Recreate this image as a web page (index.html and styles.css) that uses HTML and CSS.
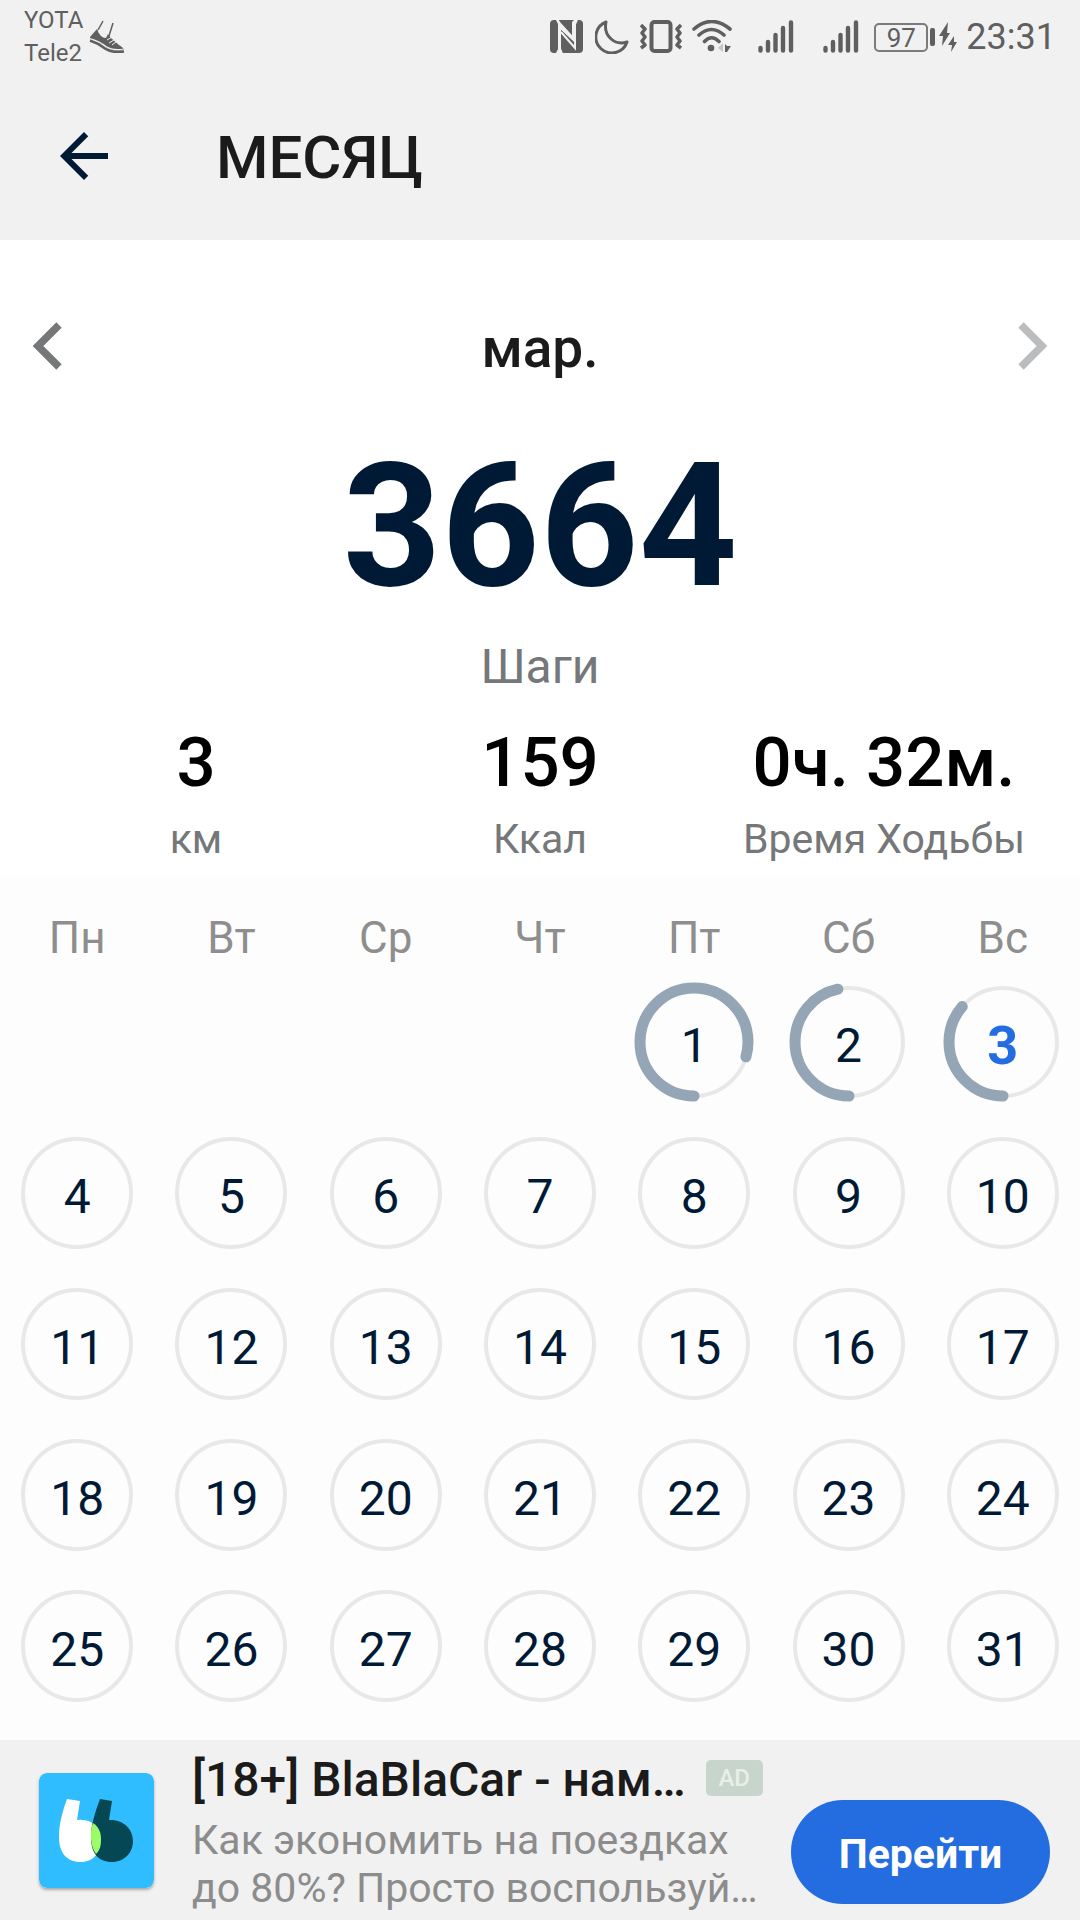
FILE: index.html
```html
<!DOCTYPE html>
<html lang="ru">
<head>
<meta charset="utf-8">
<meta name="viewport" content="width=device-width, initial-scale=1">
<title>Месяц</title>
<link rel="stylesheet" href="styles.css">
</head>
<body>
<div class="statusbar">
  <div class="carriers"><span>YOTA</span><span>Tele2</span></div>
  <svg class="shoe" width="38" height="36" viewBox="0 0 38 36">
    <path d="M8 9 L1 17 L1 19 Q10 21 18 28 Q24 32 35 30 Q35 28 30 25 L22 18 L19 14 L17 18 Q11 18 8 9Z" fill="#5f5f5f"/>
    <path d="M14 1 L9 10 M24 3 L20 16" fill="none" stroke="#5f5f5f" stroke-width="1.500"/>
    <path d="M1 20.500 Q9 23 16 28.500 Q22 33 35 31.500" fill="none" stroke="#5f5f5f" stroke-width="2.500"/>
    <path d="M1 18.500 Q10 21 17 26.500 Q24 31 35 29" fill="none" stroke="#f1f1f1" stroke-width="1.200"/>
    <path d="M18 20 L23 17 M20 23 L25 20 M23 25 L27 22" stroke="#f1f1f1" stroke-width="1"/>
  </svg>
  <div class="tray">
    <svg width="34" height="34" viewBox="0 0 34 34">
      <rect x="0" y="0" width="33" height="33" rx="4" fill="#5f5f5f"/>
      <path d="M6 0 H9 L22 15 V2 L24 0 H27 L25 4 V23 L11 10 V28 L13 33 H6 L8 29 V4Z" fill="#f1f1f1"/>
      <path d="M11 10 V28 L13 33 H25 V23Z" fill="#5f5f5f"/>
      <path d="M11 12 L25 28 V4 L27 0" fill="none" stroke="#f1f1f1" stroke-width="2"/>
      <path d="M10 2 L22 15 V3 L21 0 H9Z" fill="#5f5f5f"/>
    </svg>
    <svg class="moon" width="34" height="34" viewBox="0 0 34 34"><path d="M11 2 A16 16 0 1 0 32 22 C20 26 8 16 11 2Z" fill="none" stroke="#5f5f5f" stroke-width="3" stroke-linejoin="round"/></svg>
    <svg class="vibrate" width="42" height="34" viewBox="0 0 42 34" fill="none" stroke="#5f5f5f"><rect x="11.500" y="2" width="19" height="29" rx="3" stroke-width="4"/><path d="M1 5 L5 9 L2 13 L5 17 L2 21 L5 25 L1 28 M41 5 L37 9 L40 13 L37 17 L40 21 L37 25 L41 28" stroke-width="3.500" stroke-linejoin="round"/></svg>
    <svg class="wifi" width="40" height="34" viewBox="0 0 40 34"><path d="M2 9 Q19.500 -6 38 9 M7 15 Q19.500 4 32 15 M12.500 21.500 Q19.500 14 27 21.500" fill="none" stroke="#5f5f5f" stroke-width="3.600" stroke-linecap="round"/><circle cx="19" cy="28" r="3.300" fill="#5f5f5f"/><path d="M31 23 V32 L26 28Z" fill="#c4c4c4"/><path d="M33 24 V32 L35 32 L39 26 L35 26Z" fill="#5f5f5f"/></svg>
    <svg class="signal" width="36" height="34" viewBox="0 0 36 34" stroke="#5f5f5f" stroke-width="4.400" stroke-linecap="round"><path d="M2.500 28 V30.500 M10 22 V30.500 M17.500 15 V30.500 M25 8 V30.500 M33 2.500 V30.500"/></svg>
    <svg class="signal-2" width="36" height="34" viewBox="0 0 36 34" stroke="#5f5f5f" stroke-width="4.400" stroke-linecap="round"><path d="M2.500 28 V30.500 M10 22 V30.500 M17.500 15 V30.500 M25 8 V30.500 M33 2.500 V30.500"/></svg>
    <span class="battery">97</span>
    <svg class="charge" width="28" height="32" viewBox="0 0 28 32" fill="#5f5f5f"><rect x="0" y="7" width="5" height="18" rx="2"/><path d="M18 1 L9 15 H13 L12 25 L20 12 H17Z M24 15 L18 24 H22 L21 31 L27 21 H24Z"/></svg>
    <span class="clock">23:31</span>
  </div>
</div>

<header class="appbar">
  <button class="icon-button" type="button" aria-label="Назад">
    <svg width="72" height="72" viewBox="0 0 24 24" fill="#001a35"><path d="M20 11H7.830l5.590-5.590L12 4l-8 8 8 8 1.410-1.410L7.830 13H20v-2z"/></svg>
  </button>
  <h1>МЕСЯЦ</h1>
</header>

<main>
  <section class="summary">
    <div class="month-nav">
      <button class="icon-button" type="button" aria-label="Предыдущий месяц"><svg width="30" height="48" viewBox="0 0 30 48" fill="none" stroke="#757779" stroke-width="7.500"><path d="M27 3 L6 24 L27 45"/></svg></button>
      <h2>мар.</h2>
      <button class="icon-button" type="button" aria-label="Следующий месяц" disabled><svg width="30" height="48" viewBox="0 0 30 48" fill="none" stroke="#bbbcbe" stroke-width="7.500"><path d="M3 3 L24 24 L3 45"/></svg></button>
    </div>
    <p class="steps">3664</p>
    <p class="steps-label">Шаги</p>
    <dl class="stats">
      <div><dd>3</dd><dt>км</dt></div>
      <div><dd>159</dd><dt>Ккал</dt></div>
      <div><dd>0ч. 32м.</dd><dt>Время Ходьбы</dt></div>
    </dl>
  </section>

  <section class="calendar">
    <table>
      <thead>
        <tr><th>Пн</th><th>Вт</th><th>Ср</th><th>Чт</th><th>Пт</th><th>Сб</th><th>Вс</th></tr>
      </thead>
      <tbody>
        <tr>
          <td></td><td></td><td></td><td></td>
          <td><button class="day" type="button">1<svg class="progress" viewBox="0 0 120 120"><circle cx="60" cy="60" r="54" pathLength="360" stroke-dasharray="286 360"/></svg></button></td>
          <td><button class="day" type="button">2<svg class="progress" viewBox="0 0 120 120"><circle cx="60" cy="60" r="54" pathLength="360" stroke-dasharray="168 360"/></svg></button></td>
          <td><button class="day today" type="button">3<svg class="progress" viewBox="0 0 120 120"><circle cx="60" cy="60" r="54" pathLength="360" stroke-dasharray="131 360"/></svg></button></td>
        </tr>
        <tr>
          <td><button class="day" type="button">4</button></td>
          <td><button class="day" type="button">5</button></td>
          <td><button class="day" type="button">6</button></td>
          <td><button class="day" type="button">7</button></td>
          <td><button class="day" type="button">8</button></td>
          <td><button class="day" type="button">9</button></td>
          <td><button class="day" type="button">10</button></td>
        </tr>
        <tr>
          <td><button class="day" type="button">11</button></td>
          <td><button class="day" type="button">12</button></td>
          <td><button class="day" type="button">13</button></td>
          <td><button class="day" type="button">14</button></td>
          <td><button class="day" type="button">15</button></td>
          <td><button class="day" type="button">16</button></td>
          <td><button class="day" type="button">17</button></td>
        </tr>
        <tr>
          <td><button class="day" type="button">18</button></td>
          <td><button class="day" type="button">19</button></td>
          <td><button class="day" type="button">20</button></td>
          <td><button class="day" type="button">21</button></td>
          <td><button class="day" type="button">22</button></td>
          <td><button class="day" type="button">23</button></td>
          <td><button class="day" type="button">24</button></td>
        </tr>
        <tr>
          <td><button class="day" type="button">25</button></td>
          <td><button class="day" type="button">26</button></td>
          <td><button class="day" type="button">27</button></td>
          <td><button class="day" type="button">28</button></td>
          <td><button class="day" type="button">29</button></td>
          <td><button class="day" type="button">30</button></td>
          <td><button class="day" type="button">31</button></td>
        </tr>
      </tbody>
    </table>
  </section>
</main>

<aside class="ad">
  <svg class="ad-logo" width="115" height="115" viewBox="0 0 115 115">
    <rect width="115" height="115" rx="8" fill="#2fbdff"/>
    <path d="M28 26 L41 28 L38 47 C52 45 62 54 62 66 C62 80 54 89 42 89 C27 89 20 79 20 64 C20 51 23 40 28 26Z" fill="#fff"/>
    <path d="M61 26 L73 28 L70 47 C84 46 94 56 94 68 C94 80 85 89 73 89 C59 89 52 80 52 64 C52 51 56 40 61 26Z" fill="#054752"/>
    <path d="M54 50 C60 54 62 60 62 66 C62 73 61 77 57 81 C52 75 50 60 54 50Z" fill="#9cfc68"/>
  </svg>
  <div class="ad-copy">
    <div class="ad-head"><strong>[18+] BlaBlaCar - нам…</strong><span class="badge">AD</span></div>
    <p>Как экономить на поездках<br>до 80%? Просто воспользуй…</p>
  </div>
  <button class="cta" type="button">Перейти</button>
</aside>
</body>
</html>
```
FILE: styles.css
```css
* {
  box-sizing: border-box;
}

body {
  margin: 0;
  min-height: 100vh;
  display: flex;
  flex-direction: column;
  background: #fdfdfd;
  color: #1b1b1b;
  font-family: Roboto, "Noto Sans", sans-serif;
}

h1, h2, p, dl, dd {
  margin: 0;
}

button {
  border: 0;
  padding: 0;
  background: none;
  color: inherit;
  font: inherit;
}

svg {
  display: block;
  flex: none;
}

.icon-button {
  display: flex;
}

/* System status bar */
.statusbar {
  display: flex;
  height: 72px;
  padding: 4px 24px 0;
  background: #f1f1f1;
  color: #5f5f5f;
}

.carriers {
  display: flex;
  flex-direction: column;
  font-size: 24px;
  line-height: 33px;
}

.shoe {
  margin: 16px 0 0 6px;
}

.tray {
  display: flex;
  align-items: center;
  height: 66px;
  margin-left: auto;
}

.moon { margin-left: 11px; }
.vibrate { margin-left: 11px; }
.wifi { margin-left: 10px; }
.signal { margin-left: 26px; }
.signal-2 { margin-left: 29px; }

.battery {
  width: 54px;
  height: 29px;
  margin-left: 15px;
  border: 2px solid #7b7b7b;
  border-radius: 5px;
  font-size: 26px;
  line-height: 26px;
  text-align: center;
}

.charge {
  margin: 0 8px 0 2px;
}

.clock {
  font-size: 36px;
  line-height: 40px;
}

/* App bar */
.appbar {
  display: flex;
  align-items: center;
  gap: 96px;
  height: 168px;
  padding: 0 48px;
  background: #f1f1f1;
}

h1 {
  padding-top: 4px;
  font-size: 60px;
  line-height: 72px;
  font-weight: 500;
}

/* Monthly summary */
.summary {
  padding: 68px 24px 12px;
  background: #fff;
  text-align: center;
}

.month-nav {
  display: flex;
  align-items: center;
  justify-content: space-between;
  padding: 0 8px;
}

h2 {
  padding-top: 4px;
  font-size: 55px;
  line-height: 72px;
  font-weight: 500;
}

.steps {
  margin-top: 42px;
  color: #001a35;
  font-size: 172px;
  line-height: 200px;
  font-weight: 700;
}

.steps-label {
  margin-top: 13px;
  color: #757779;
  font-size: 48px;
  line-height: 56px;
}

.stats {
  display: grid;
  grid-template-columns: repeat(3, 1fr);
  margin-top: 28px;
}

.stats dd {
  color: #000;
  font-size: 69px;
  line-height: 80px;
  font-weight: 500;
}

.stats dt {
  margin-top: 11px;
  color: #757779;
  font-size: 41px;
  line-height: 50px;
  white-space: nowrap;
}

/* Calendar */
.calendar {
  padding: 34px 0 19px;
}

table {
  width: 100%;
  table-layout: fixed;
  border-collapse: collapse;
}

th, td {
  padding: 0;
  text-align: center;
}

th {
  height: 56px;
  color: #8e8e8e;
  font-size: 44px;
  line-height: 56px;
  font-weight: 400;
}

td {
  height: 151px;
  vertical-align: middle;
}

.day {
  position: relative;
  display: block;
  width: 112px;
  height: 112px;
  margin: 0 auto;
  padding-top: 8px;
  border: 4px solid #e8e8e8;
  border-radius: 50%;
  color: #001a35;
  font-size: 48px;
  line-height: 56px;
}

.today {
  color: #246de0;
  font-size: 54px;
  font-weight: 700;
}

.progress {
  position: absolute;
  inset: -8px;
  width: 120px;
  height: 120px;
  fill: none;
  stroke: #94a5b6;
  stroke-width: 11px;
  stroke-linecap: round;
  transform: rotate(90deg);
}

/* Advertisement */
.ad {
  display: flex;
  flex: 1;
  align-items: flex-start;
  padding: 12px 30px 4px 39px;
  background: #f1f1f1;
}

.ad-logo {
  margin-top: 21px;
  border-radius: 8px;
  box-shadow: 0 2px 3px #aaa;
}

.ad-copy {
  flex: 1;
  min-width: 0;
  margin-left: 38px;
  white-space: nowrap;
}

.ad-head {
  display: flex;
  align-items: center;
  gap: 20px;
}

.ad-head strong {
  font-size: 48px;
  line-height: 56px;
  font-weight: 500;
}

.badge {
  width: 57px;
  height: 36px;
  margin-bottom: 4px;
  border-radius: 5px;
  background: #c8d5cc;
  color: #e7efe8;
  font-size: 24px;
  line-height: 36px;
  font-weight: 500;
  text-align: center;
}

.ad-copy p {
  margin-top: 8px;
  color: #8c8c8c;
  font-size: 41px;
  line-height: 48px;
}

.cta {
  width: 259px;
  height: 104px;
  margin-top: 48px;
  padding-top: 4px;
  border-radius: 52px;
  background: #246de0;
  color: #fff;
  font-size: 41px;
  font-weight: 700;
}
```
